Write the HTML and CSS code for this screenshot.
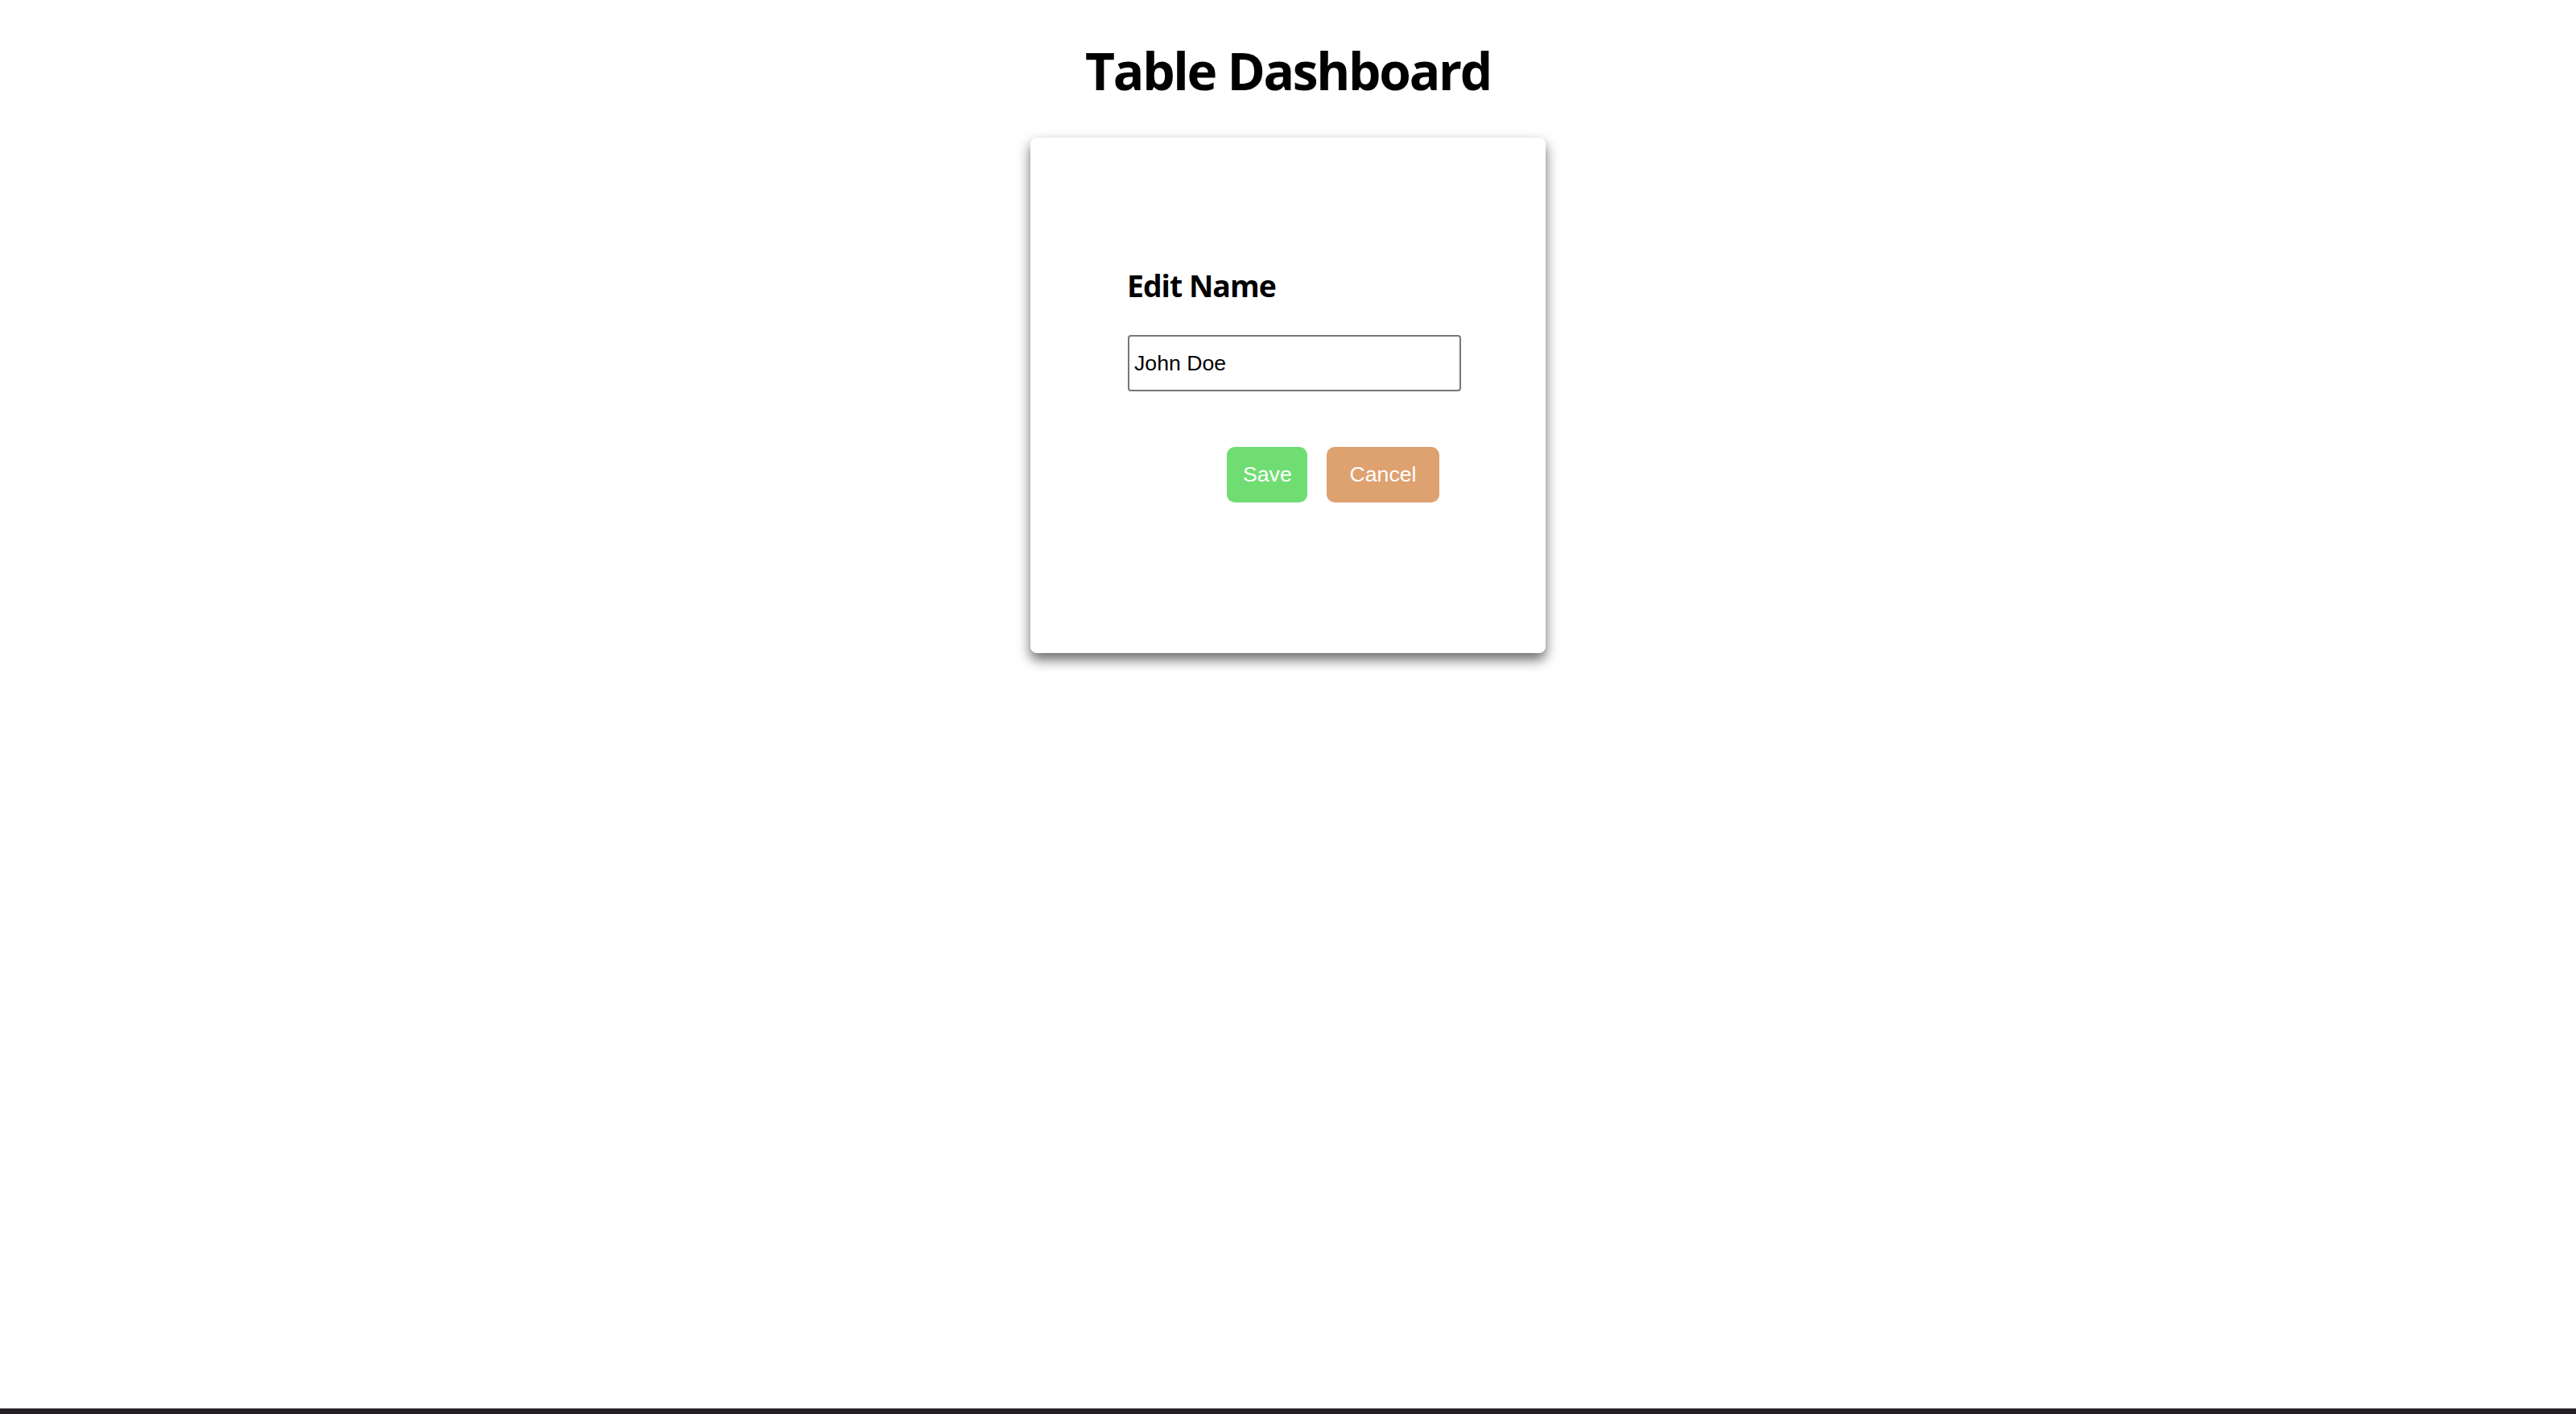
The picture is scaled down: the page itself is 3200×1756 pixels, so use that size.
FILE: index.html
```html
<!DOCTYPE html>
<html lang="en">
<head>
<meta charset="utf-8">
<title>Table Dashboard</title>
<link rel="stylesheet" href="styles.css">
</head>
<body>
  <h1 class="title">Table Dashboard</h1>
  <div class="card">
    <h3 class="card-title">Edit Name</h3>
    <input class="name-input" type="text" value="John Doe">
    <div class="actions">
      <button class="btn btn-save">Save</button>
      <button class="btn btn-cancel">Cancel</button>
    </div>
  </div>
  <div class="taskbar"></div>
</body>
</html>
```
FILE: styles.css
```css
html, body {
  margin: 0;
  padding: 0;
  background: #ffffff;
}

body {
  font-family: "Open Sans", "Noto Sans", "DejaVu Sans", sans-serif;
  color: #000;
  min-height: 1756px;
}

.title {
  margin: 45px 0 41px;
  font-size: 64px;
  line-height: 85px;
  font-weight: 700;
  text-align: center;
  letter-spacing: -2.3px;
}

.card {
  width: 640px;
  height: 640px;
  box-sizing: border-box;
  margin: 0 auto;
  background: #fff;
  border-radius: 8px;
  box-shadow: 0 8px 16px rgba(0, 0, 0, 0.6);
  padding: 159px 0 0 120px;
  display: flex;
  flex-direction: column;
  align-items: flex-start;
}

.card-title {
  margin: 0;
  font-size: 37.4px;
  line-height: 50px;
  font-weight: 700;
  letter-spacing: -1px;
}

.name-input {
  margin: 36px 0 0 1px;
  width: 414px;
  height: 70px;
  box-sizing: border-box;
  border: 2px solid #767676;
  border-radius: 4px;
  padding: 0 6px;
  font-family: "Liberation Sans", Arial, sans-serif;
  font-size: 26.67px;
  color: #000;
  background: #fff;
  outline: none;
}

.actions {
  display: flex;
  gap: 24px;
  margin: 69px 0 0 124px;
}

.btn {
  height: 69px;
  border: none;
  border-radius: 10px;
  color: #fff;
  font-family: "Liberation Sans", Arial, sans-serif;
  font-size: 26.67px;
  line-height: 69px;
  padding: 0 20px;
  cursor: pointer;
}

.btn-save {
  width: 100px;
  background: #70dd73;
}

.btn-cancel {
  width: 140px;
  background: #dea170;
}

.taskbar {
  position: fixed;
  left: 0;
  right: 0;
  bottom: 0;
  height: 6px;
  background: #231f24;
  border-top: 1px solid #3a3a3a;
}
```
